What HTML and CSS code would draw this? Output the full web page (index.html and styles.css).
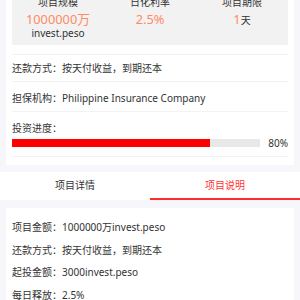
FILE: index.html
```html
<!DOCTYPE html>
<html lang="zh-CN">
<head>
    <meta charset="UTF-8">
    <meta name="viewport" content="width=device-width, initial-scale=1.0">
    <title>项目说明</title>
    <link rel="stylesheet" href="styles.css">
</head>
<body>
<div class="page">
    <!-- Summary card -->
    <div class="card summary">
        <div class="stats">
            <div class="stat">
                <p class="stat-label">项目规模</p>
                <p class="stat-value">1000000万</p>
                <p class="stat-unit">invest.peso</p>
            </div>
            <div class="stat">
                <p class="stat-label">日化利率</p>
                <p class="stat-value">2.5%</p>
            </div>
            <div class="stat">
                <p class="stat-label">项目期限</p>
                <p class="stat-value">1<span class="unit">天</span></p>
            </div>
        </div>
        <div class="row first">还款方式：按天付收益，到期还本</div>
        <div class="row">担保机构：Philippine Insurance Company</div>
        <div class="row progress-row">
            <div>投资进度：</div>
            <div class="progress">
                <div class="track"><div class="fill" style="width: 80%"></div></div>
                <span class="percent">80%</span>
            </div>
        </div>
    </div>

    <!-- Tabs -->
    <div class="tabs">
        <a href="#" class="tab">项目详情</a>
        <a href="#" class="tab active">项目说明</a>
    </div>

    <!-- Project description -->
    <div class="card details">
        <p>项目金额：1000000万invest.peso</p>
        <p>还款方式：按天付收益，到期还本</p>
        <p>起投金额：3000invest.peso</p>
        <p>每日释放：2.5%</p>
    </div>
</div>
</body>
</html>
```

FILE: styles.css
```css
body {
    margin: 0;
    padding: 0;
    background-color: #f6f6fb;
    font-family: "Noto Sans", "Noto Sans CJK SC", sans-serif;
    color: #333;
    font-size: 10px;
}

p {
    margin: 0;
}

.page {
    margin-top: -8px;
}

.card {
    background-color: #fff;
    margin: 0 6px;
}

.summary {
    padding: 0 6px 8px;
}

/* Top figures */
.stats {
    display: flex;
    background-color: #f2f2f2;
    padding-bottom: 6px;
    margin-bottom: 9px;
}

.stat {
    flex: 1;
    text-align: center;
}

.stat-label {
    line-height: 20px;
}

.stat-value {
    color: #ff8a65;
    font-size: 12.8px;
    line-height: 15px;
}

.stat-value .unit {
    color: #333;
    font-size: 10px;
}

.stat-unit {
    line-height: 12px;
}

/* Info rows */
.row {
    border-top: 1px solid #f3f3f3;
    line-height: 14px;
    padding: 9px 0 6px;
}

.row.first {
    padding-top: 6px;
}

.progress-row {
    border-bottom: 1px solid #f3f3f3;
    padding-bottom: 9px;
}

.progress {
    display: flex;
    align-items: center;
    margin-top: 4px;
}

.track {
    width: 248px;
    height: 8px;
    background-color: #e8e8e8;
}

.fill {
    height: 100%;
    background-color: #ff0000;
}

.percent {
    margin-left: auto;
    line-height: 8px;
}

/* Tabs */
.tabs {
    display: flex;
    background-color: #fff;
    margin-top: 7px;
}

.tab {
    flex: 1;
    text-align: center;
    text-decoration: none;
    color: #333;
    line-height: 26px;
    border-bottom: 2px solid transparent;
}

.tab.active {
    color: #ff3333;
    border-bottom-color: #ff2a2a;
}

/* Description card */
.details {
    margin-top: 8px;
    padding: 8px 6px 0;
}

.details p {
    line-height: 22.6px;
}
```
